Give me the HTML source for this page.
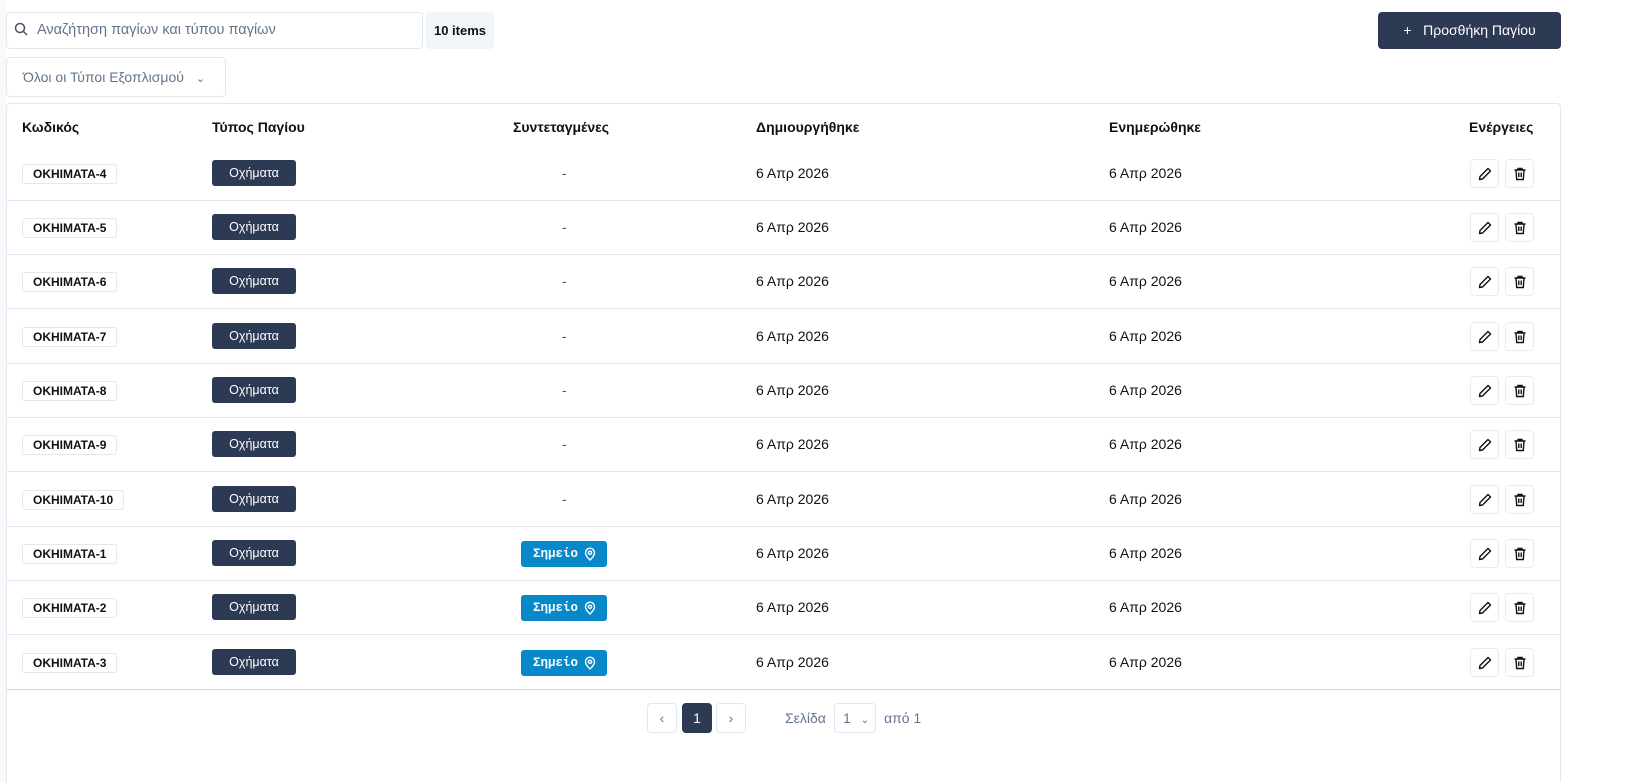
<!DOCTYPE html>
<html><head><meta charset="utf-8"><style>
*{box-sizing:border-box;margin:0;padding:0}
html,body{width:1645px;height:782px;overflow:hidden;background:#fff}
body{font-family:"Liberation Sans","DejaVu Sans",sans-serif;color:#111;font-size:14px;position:relative}
.abs{position:absolute}
.search{left:6px;top:12px;width:417px;height:37px;border:1px solid #e2e8f0;border-radius:4px;color:#64748b;font-size:14.5px;padding:9px 0 0 30px}
.items{left:426px;top:12px;width:68px;height:37px;background:#f1f5f9;border-radius:4px;font-size:13px;font-weight:bold;text-align:center;line-height:37px}
.add{left:1378px;top:12px;width:183px;height:37px;background:#2d3a54;border-radius:4px;color:#fff;font-size:14px;line-height:37px;text-align:center}
.filter{left:6px;top:57px;width:220px;height:40px;border:1px solid #e2e8f0;border-radius:4px;color:#64748b;font-size:14px;padding:11px 0 0 16px}
.card{left:6px;top:103px;width:1555px;height:700px;border:1px solid #e2e8f0;border-radius:4px}
.th{top:119px;font-weight:bold;font-size:14px}
.row{position:absolute;left:7px;width:1553px;height:54px;border-bottom:1px solid #e2e8f0}
.code{position:absolute;left:15px;top:17px;height:20px;border:1px solid #e2e8f0;border-radius:3px;font-size:12px;font-weight:bold;line-height:18px;padding:0 10px}
.type{position:absolute;left:205px;top:13px;width:84px;height:26px;background:#2d3a54;border-radius:3px;color:#fff;font-size:12.5px;text-align:center;line-height:26px}
.pt{position:absolute;left:514px;top:14px;width:86px;height:26px;background:#0788c8;border-radius:3px;color:#fff;font-family:"Liberation Mono",monospace;font-weight:bold;font-size:12.5px;line-height:26px;padding-left:12px}
.pt svg{position:absolute;left:62px;top:6px}
.dash{position:absolute;left:555px;top:18px;color:#555}
.d1{position:absolute;left:749px;top:18px}
.d2{position:absolute;left:1102px;top:18px}
.ib{position:absolute;top:12px;width:29px;height:29px;border:1px solid #e8ecf1;border-radius:4px}
.ib svg{position:absolute;left:6px;top:6px}
.e{left:1463px}.t{left:1498px}
.pg{top:703px;width:30px;height:30px;border:1px solid #e2e8f0;border-radius:4px;text-align:center;line-height:28px;color:#64748b}
</style></head><body>
<svg width="0" height="0" style="position:absolute"><defs>
<symbol id="pen" viewBox="0 0 16 16"><path d="M11 2.5l2.5 2.5L5.5 13 2.5 13.5 3 10.5z" fill="none" stroke="#111" stroke-width="1.4" stroke-linejoin="round"/></symbol>
<symbol id="bin" viewBox="0 0 16 16"><path d="M2.5 4h11M6 4V2.5h4V4M4 4l.7 9.5h6.6L12 4M6.8 6.5v4.5M9.2 6.5v4.5" fill="none" stroke="#111" stroke-width="1.4"/></symbol>
<symbol id="pin" viewBox="0 0 14 14"><path d="M7 13s4.5-4 4.5-7.3A4.5 4.5 0 0 0 2.5 5.7C2.5 9 7 13 7 13z" fill="none" stroke="#fff" stroke-width="1.4"/><circle cx="7" cy="5.8" r="1.6" fill="none" stroke="#fff" stroke-width="1.4"/></symbol>
</defs></svg>
<div class="abs" style="left:0;top:0;width:6px;height:782px;background:#f8f9fa"></div>
<div class="abs search">Αναζήτηση παγίων και τύπου παγίων</div>
<svg class="abs" style="left:14px;top:22px" width="14" height="14" viewBox="0 0 14 14" fill="none" stroke="#475569" stroke-width="1.5"><circle cx="6" cy="6" r="4.5"/><path d="M9.5 9.5L13 13"/></svg>
<div class="abs items">10 items</div>
<div class="abs add">+&nbsp;&nbsp; Προσθήκη Παγίου</div>
<div class="abs filter">Όλοι οι Τύποι Εξοπλισμού <span style="margin-left:8px;font-size:11px">&#8964;</span></div>
<div class="abs card"></div>
<div class="abs th" style="left:22px">Κωδικός</div>
<div class="abs th" style="left:212px">Τύπος Παγίου</div>
<div class="abs th" style="left:513px">Συντεταγμένες</div>
<div class="abs th" style="left:756px">Δημιουργήθηκε</div>
<div class="abs th" style="left:1109px">Ενημερώθηκε</div>
<div class="abs th" style="left:1469px">Ενέργειες</div>

<div class="row" style="top:147px"><div class="code">ΟΚΗΙΜΑΤΑ-4</div><div class="type">Οχήματα</div><div class="dash">-</div><div class="d1">6 Απρ 2026</div><div class="d2">6 Απρ 2026</div><div class="ib e"><svg width="16" height="16"><use href="#pen"/></svg></div><div class="ib t"><svg width="16" height="16"><use href="#bin"/></svg></div></div>
<div class="row" style="top:201px"><div class="code">ΟΚΗΙΜΑΤΑ-5</div><div class="type">Οχήματα</div><div class="dash">-</div><div class="d1">6 Απρ 2026</div><div class="d2">6 Απρ 2026</div><div class="ib e"><svg width="16" height="16"><use href="#pen"/></svg></div><div class="ib t"><svg width="16" height="16"><use href="#bin"/></svg></div></div>
<div class="row" style="top:255px"><div class="code">ΟΚΗΙΜΑΤΑ-6</div><div class="type">Οχήματα</div><div class="dash">-</div><div class="d1">6 Απρ 2026</div><div class="d2">6 Απρ 2026</div><div class="ib e"><svg width="16" height="16"><use href="#pen"/></svg></div><div class="ib t"><svg width="16" height="16"><use href="#bin"/></svg></div></div>
<div class="row" style="top:310px"><div class="code">ΟΚΗΙΜΑΤΑ-7</div><div class="type">Οχήματα</div><div class="dash">-</div><div class="d1">6 Απρ 2026</div><div class="d2">6 Απρ 2026</div><div class="ib e"><svg width="16" height="16"><use href="#pen"/></svg></div><div class="ib t"><svg width="16" height="16"><use href="#bin"/></svg></div></div>
<div class="row" style="top:364px"><div class="code">ΟΚΗΙΜΑΤΑ-8</div><div class="type">Οχήματα</div><div class="dash">-</div><div class="d1">6 Απρ 2026</div><div class="d2">6 Απρ 2026</div><div class="ib e"><svg width="16" height="16"><use href="#pen"/></svg></div><div class="ib t"><svg width="16" height="16"><use href="#bin"/></svg></div></div>
<div class="row" style="top:418px"><div class="code">ΟΚΗΙΜΑΤΑ-9</div><div class="type">Οχήματα</div><div class="dash">-</div><div class="d1">6 Απρ 2026</div><div class="d2">6 Απρ 2026</div><div class="ib e"><svg width="16" height="16"><use href="#pen"/></svg></div><div class="ib t"><svg width="16" height="16"><use href="#bin"/></svg></div></div>
<div class="row" style="top:473px"><div class="code">ΟΚΗΙΜΑΤΑ-10</div><div class="type">Οχήματα</div><div class="dash">-</div><div class="d1">6 Απρ 2026</div><div class="d2">6 Απρ 2026</div><div class="ib e"><svg width="16" height="16"><use href="#pen"/></svg></div><div class="ib t"><svg width="16" height="16"><use href="#bin"/></svg></div></div>
<div class="row" style="top:527px"><div class="code">ΟΚΗΙΜΑΤΑ-1</div><div class="type">Οχήματα</div><div class="pt">Σημείο<svg width="14" height="14"><use href="#pin"/></svg></div><div class="d1">6 Απρ 2026</div><div class="d2">6 Απρ 2026</div><div class="ib e"><svg width="16" height="16"><use href="#pen"/></svg></div><div class="ib t"><svg width="16" height="16"><use href="#bin"/></svg></div></div>
<div class="row" style="top:581px"><div class="code">ΟΚΗΙΜΑΤΑ-2</div><div class="type">Οχήματα</div><div class="pt">Σημείο<svg width="14" height="14"><use href="#pin"/></svg></div><div class="d1">6 Απρ 2026</div><div class="d2">6 Απρ 2026</div><div class="ib e"><svg width="16" height="16"><use href="#pen"/></svg></div><div class="ib t"><svg width="16" height="16"><use href="#bin"/></svg></div></div>
<div class="row" style="top:636px;border-bottom-color:#d4d8de"><div class="code">ΟΚΗΙΜΑΤΑ-3</div><div class="type">Οχήματα</div><div class="pt">Σημείο<svg width="14" height="14"><use href="#pin"/></svg></div><div class="d1">6 Απρ 2026</div><div class="d2">6 Απρ 2026</div><div class="ib e"><svg width="16" height="16"><use href="#pen"/></svg></div><div class="ib t"><svg width="16" height="16"><use href="#bin"/></svg></div></div>

<div class="abs pg" style="left:647px">&#8249;</div>
<div class="abs pg" style="left:682px;background:#2d3a54;color:#fff;border-color:#2d3a54">1</div>
<div class="abs pg" style="left:716px">&#8250;</div>
<div class="abs" style="left:785px;top:710px;color:#64748b">Σελίδα</div>
<div class="abs" style="left:834px;top:703px;width:42px;height:30px;border:1px solid #e2e8f0;border-radius:4px;color:#64748b;padding:6px 0 0 8px">1 <span style="font-size:10px;margin-left:6px">&#8964;</span></div>
<div class="abs" style="left:884px;top:710px;color:#64748b">από 1</div>
</body></html>
